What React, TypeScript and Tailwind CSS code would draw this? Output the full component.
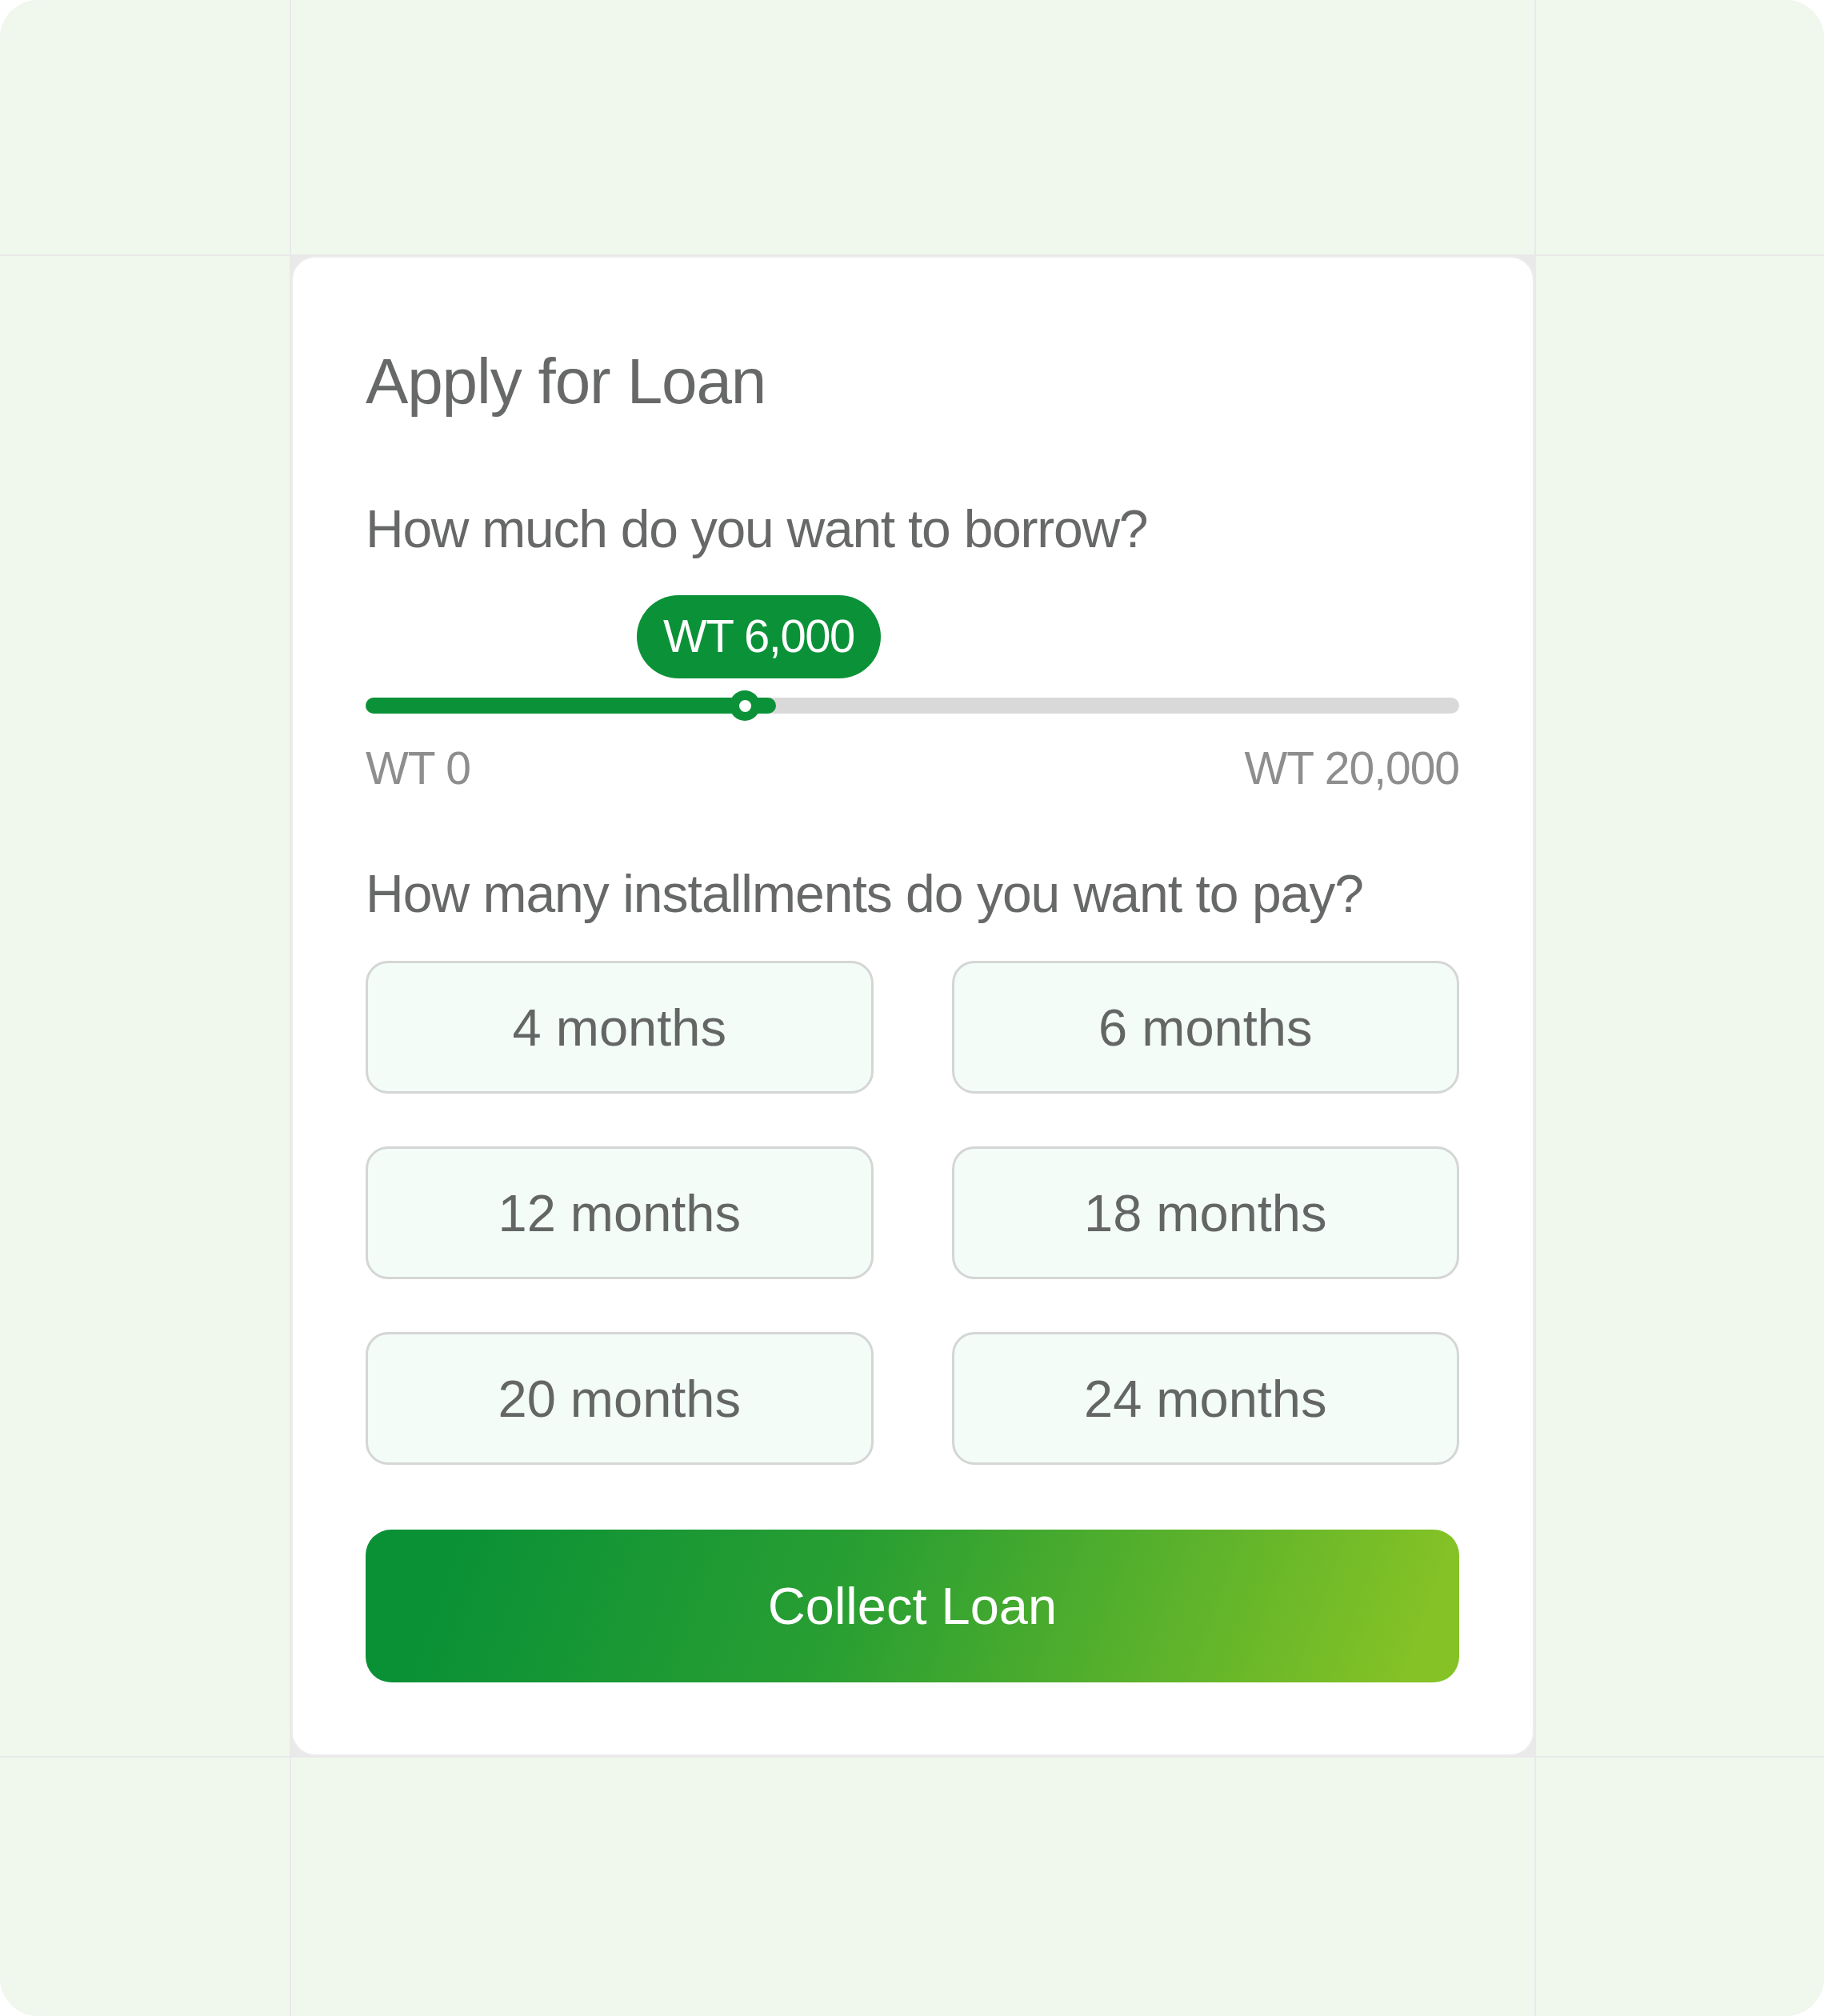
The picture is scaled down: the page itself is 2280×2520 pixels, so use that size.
const terms = ['4 months', '6 months', '12 months', '18 months', '20 months', '24 months'];

function Cell() {
  return <div className="bg-[#f0f8ee]" />;
}

function AmountSlider() {
  return (
    <div>
      <div className="ml-[339px] mt-[50px] flex h-[104px] w-[305px] items-center justify-center rounded-full bg-[#0b9238] pb-[2px] text-[58px] leading-none tracking-[-0.025em] text-white">
        WT 6,000
      </div>
      <div className="mt-[14px] py-[10px]">
        <div className="relative h-[20px] rounded-full bg-[#d9d9d9]">
          <div className="absolute left-0 top-0 h-[20px] w-[513px] rounded-full bg-[#0b9238]" />
          <div className="absolute left-[455px] top-[-9px] flex h-[38px] w-[38px] items-center justify-center rounded-full bg-[#0b9238]">
            <div className="h-[15px] w-[15px] rounded-full bg-white" />
          </div>
        </div>
      </div>
      <div className="mt-[30px] flex justify-between text-[57px] leading-none tracking-[-0.018em] text-[#8e8e8e]">
        <span>WT 0</span>
        <span>WT 20,000</span>
      </div>
    </div>
  );
}

function LoanCard() {
  return (
    <div className="rounded-[30px] border-2 border-[#ececec] bg-white pb-[90px] pl-[91px] pr-[92px] pt-[115px]">
      <h1 className="text-[80px] leading-none tracking-[-0.014em] text-[#676868]">Apply for Loan</h1>

      <p className="mt-[111px] text-[66px] leading-none tracking-[-0.019em] text-[#676868]">
        How much do you want to borrow?
      </p>
      <AmountSlider />

      <p className="mt-[95px] text-[66px] leading-none tracking-[-0.015em] text-[#676868]">
        How many installments do you want to pay?
      </p>
      <div className="mt-[51px] grid grid-cols-2 gap-x-[98px] gap-y-[66px]">
        {terms.map((t) => (
          <button
            key={t}
            className="flex h-[166px] items-center justify-center rounded-[28px] border-[3px] border-[#d4d6d5] bg-[#f3fcf7] text-[65px] leading-none text-[#646666]"
          >
            {t}
          </button>
        ))}
      </div>

      <button className="mt-[81px] flex h-[191px] w-full items-center justify-center rounded-[32px] bg-[linear-gradient(110deg,#0a9136_8%,#2a9f32_45%,#84c226_95%)] text-[65px] leading-none text-white">
        Collect Loan
      </button>
    </div>
  );
}

export default function App() {
  return (
    <div className="min-h-screen bg-white">
      <div className="grid h-[2520px] w-[2280px] grid-cols-[362px_1554px_1fr] grid-rows-[318px_auto_1fr] gap-[2px] overflow-hidden rounded-[48px] bg-[#e9e9e9] font-['Liberation_Sans',Arial,sans-serif]">
        <Cell />
        <Cell />
        <Cell />
        <Cell />
        <LoanCard />
        <Cell />
        <Cell />
        <Cell />
        <Cell />
      </div>
    </div>
  );
}
